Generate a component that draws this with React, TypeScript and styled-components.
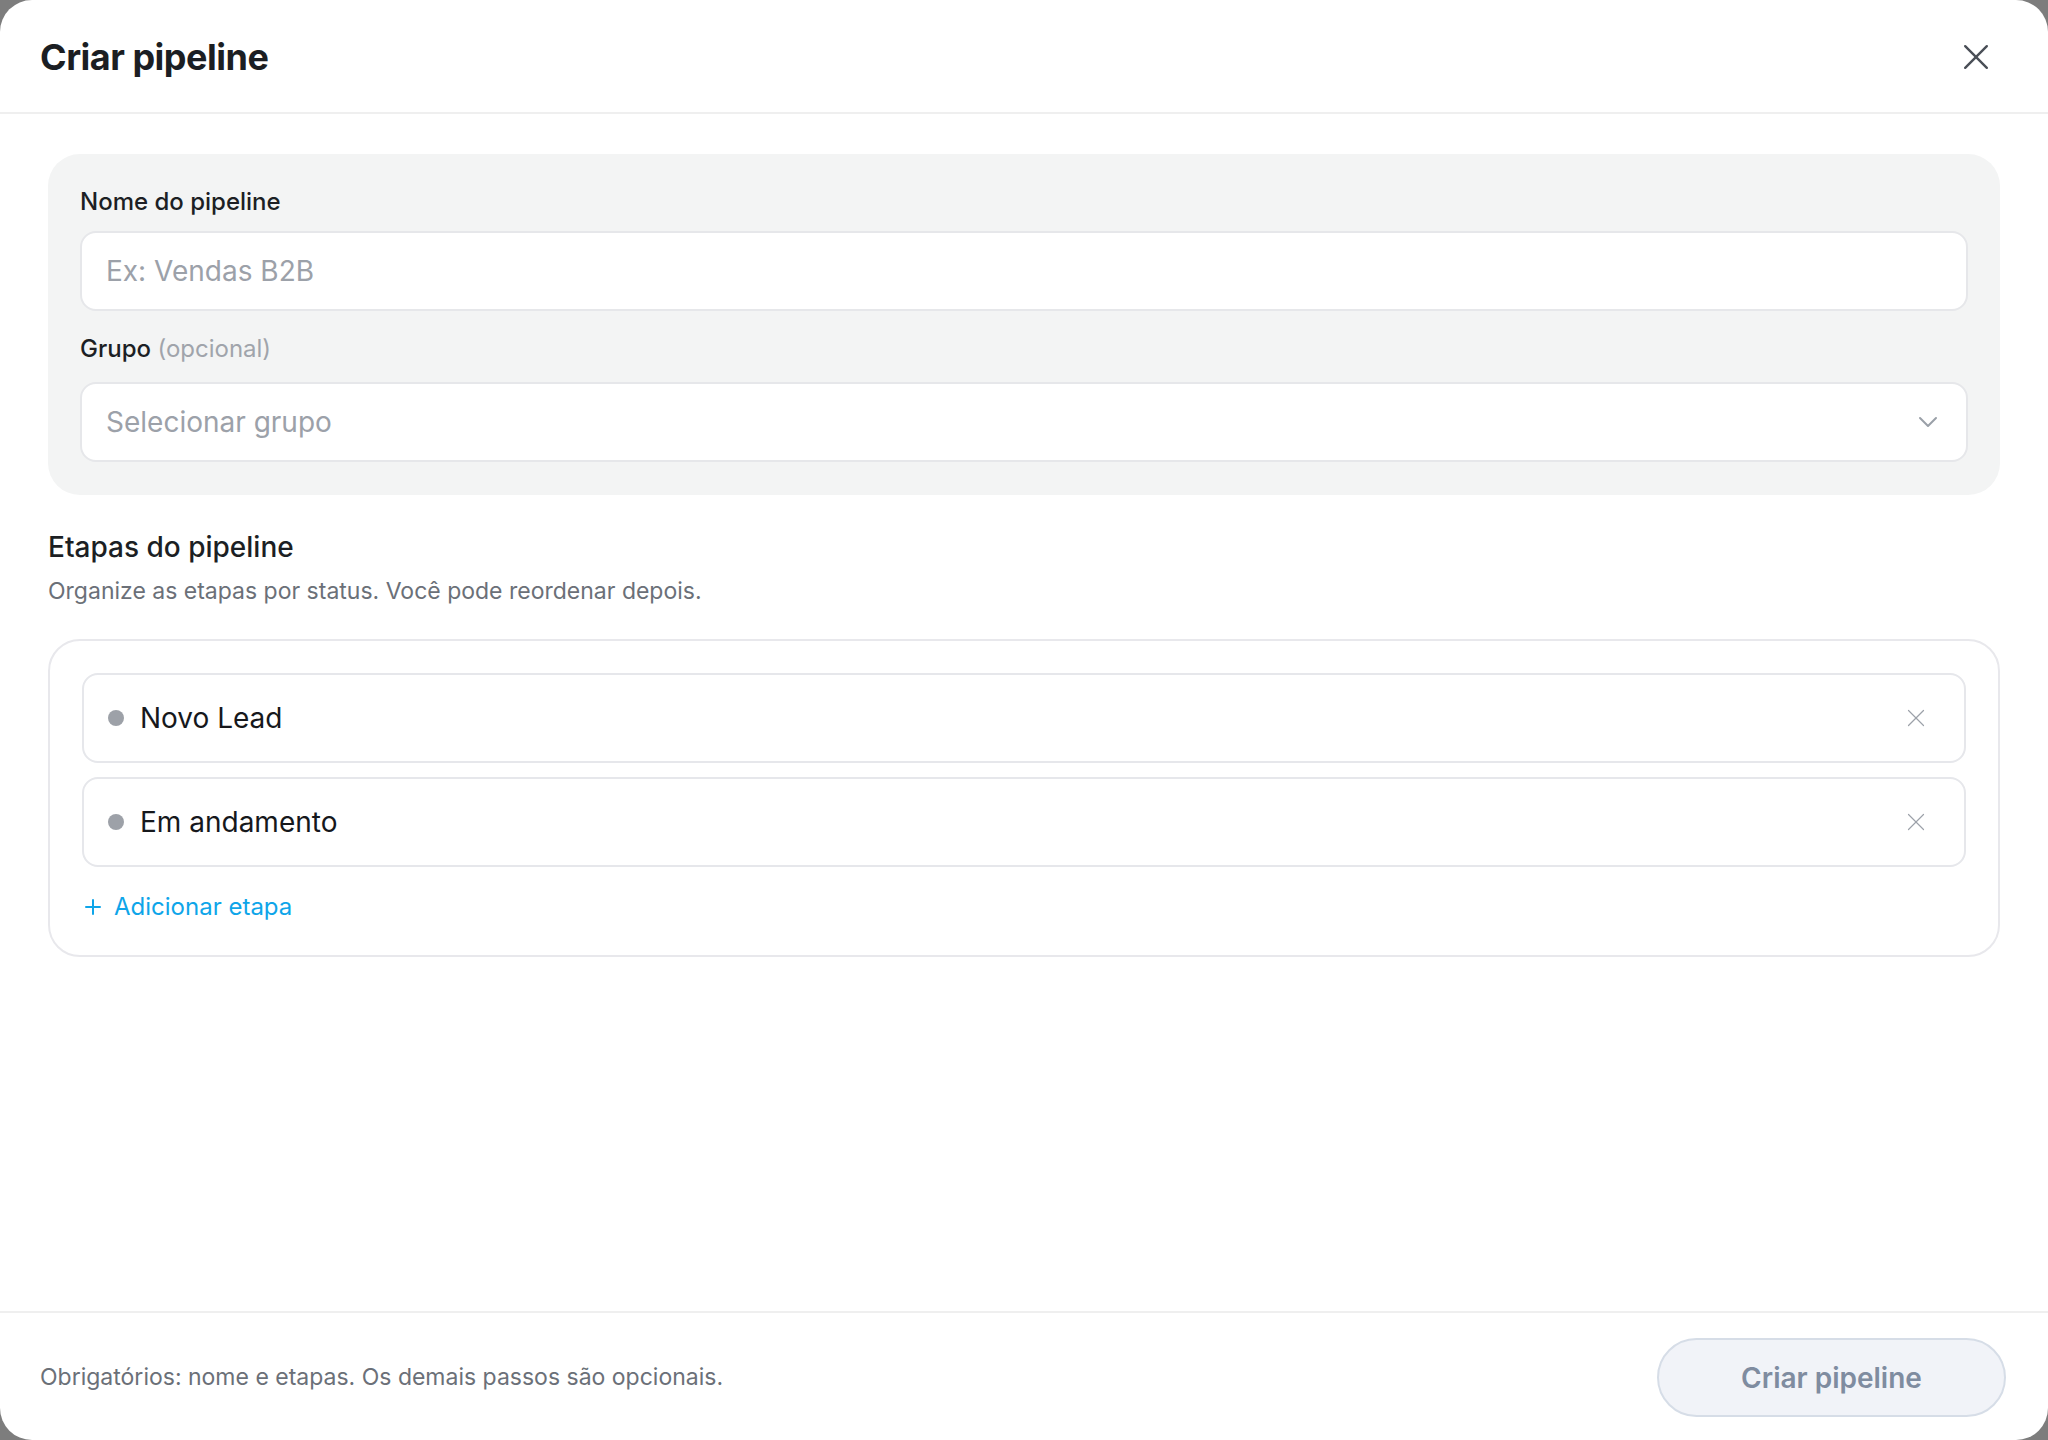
import React from 'react';
import styled, { createGlobalStyle } from 'styled-components';

const GlobalStyle = createGlobalStyle`
  html, body {
    margin: 0;
    padding: 0;
    background: #7d7d7d;
  }
  * { box-sizing: border-box; }
  body {
    font-family: Inter, "Noto Sans", "Liberation Sans", sans-serif;
    color: #1c1f24;
  }
`;

const Modal = styled.div`
  width: 100vw;
  height: 100vh;
  background: #ffffff;
  border-radius: 32px;
  display: flex;
  flex-direction: column;
  overflow: hidden;
`;

const Header = styled.header`
  height: 114px;
  flex-shrink: 0;
  display: flex;
  align-items: center;
  justify-content: space-between;
  padding: 2px 48px 0 40px;
  border-bottom: 2px solid #efefef;
`;

const Title = styled.h1`
  margin: 0;
  font-size: 36px;
  font-weight: 700;
  letter-spacing: -0.5px;
  color: #1b1e23;
`;

const IconButton = styled.button<{ $size: number; $color: string }>`
  width: ${(p) => p.$size}px;
  height: ${(p) => p.$size}px;
  display: flex;
  align-items: center;
  justify-content: center;
  border: none;
  background: transparent;
  padding: 0;
  cursor: pointer;
  color: ${(p) => p.$color};
`;

const Body = styled.main`
  flex: 1;
  padding: 40px 48px;
  display: flex;
  flex-direction: column;
`;

const FieldsPanel = styled.section`
  background: #f3f4f4;
  border-radius: 32px;
  padding: 32px 32px 33px;
  display: flex;
  flex-direction: column;
`;

const Label = styled.label<{ $spaced?: boolean }>`
  font-size: 24px;
  line-height: 32px;
  font-weight: 500;
  color: #1c1f24;
  margin: ${(p) => (p.$spaced ? '22px 0 17px' : '0 0 13px')};
`;

const Optional = styled.span`
  color: #a0a4ab;
  font-weight: 400;
`;

const InputBox = styled.div`
  height: 80px;
  background: #ffffff;
  border: 2px solid #e6e7ea;
  border-radius: 16px;
  padding: 0 28px 0 24px;
  display: flex;
  align-items: center;
  justify-content: space-between;
  font-size: 28px;
  color: #9ca1a9;
`;

const SectionTitle = styled.h2`
  margin: 34px 0 10px;
  font-size: 28px;
  line-height: 36px;
  font-weight: 500;
  color: #1c1f24;
`;

const SectionHint = styled.p`
  margin: 0;
  font-size: 23px;
  line-height: 32px;
  color: #6b7078;
`;

const StagesBox = styled.section`
  margin-top: 32px;
  border: 2px solid #e8e8ec;
  border-radius: 32px;
  padding: 32px;
  display: flex;
  flex-direction: column;
  gap: 14px;
`;

const StageRow = styled.div`
  height: 90px;
  border: 2px solid #e6e7eb;
  border-radius: 16px;
  padding: 0 24px;
  display: flex;
  align-items: center;
  gap: 16px;
`;

const Dot = styled.span`
  width: 16px;
  height: 16px;
  border-radius: 50%;
  background: #9da1a8;
  flex-shrink: 0;
`;

const StageName = styled.span`
  flex: 1;
  font-size: 28px;
  color: #16181c;
`;

const AddLink = styled.button`
  margin-top: 10px;
  align-self: flex-start;
  display: flex;
  align-items: center;
  gap: 12px;
  border: none;
  background: transparent;
  padding: 0 0 0 2px;
  font-family: inherit;
  font-size: 24px;
  line-height: 32px;
  color: #0ea5e9;
  cursor: pointer;
`;

const Footer = styled.footer`
  height: 129px;
  flex-shrink: 0;
  border-top: 2px solid #efefef;
  padding: 0 42px 0 40px;
  display: flex;
  align-items: center;
  justify-content: space-between;
`;

const FooterNote = styled.p`
  margin: 0;
  font-size: 23px;
  color: #6b7078;
`;

const PrimaryButton = styled.button`
  width: 349px;
  height: 79px;
  margin-top: 2px;
  border-radius: 999px;
  border: 2px solid #d6dde7;
  background: #f1f3f8;
  color: #7f8ca0;
  font-family: inherit;
  font-size: 28px;
  font-weight: 600;
  cursor: not-allowed;
`;

const CrossIcon = ({ size, stroke }: { size: number; stroke: number }) => (
  <svg width={size} height={size} viewBox="0 0 24 24" fill="none" stroke="currentColor" strokeWidth={stroke} strokeLinecap="round">
    <line x1="2" y1="2" x2="22" y2="22" />
    <line x1="22" y1="2" x2="2" y2="22" />
  </svg>
);

const ChevronDown = () => (
  <svg width="20" height="12" viewBox="0 0 20 12" fill="none" stroke="#9aa0a8" strokeWidth="2" strokeLinecap="round" strokeLinejoin="round">
    <polyline points="2,2 10,10 18,2" />
  </svg>
);

const PlusIcon = () => (
  <svg width="18" height="18" viewBox="0 0 18 18" fill="none" stroke="currentColor" strokeWidth="2" strokeLinecap="round">
    <line x1="9" y1="2" x2="9" y2="16" />
    <line x1="2" y1="9" x2="16" y2="9" />
  </svg>
);

const stages = ['Novo Lead', 'Em andamento'];

export default function App() {
  return (
    <>
      <GlobalStyle />
      <Modal>
        <Header>
          <Title>Criar pipeline</Title>
          <IconButton $size={48} $color="#4a4f57" aria-label="Fechar">
            <CrossIcon size={26} stroke={2.2} />
          </IconButton>
        </Header>

        <Body>
          <FieldsPanel>
            <Label>Nome do pipeline</Label>
            <InputBox>Ex: Vendas B2B</InputBox>
            <Label $spaced>
              Grupo <Optional>(opcional)</Optional>
            </Label>
            <InputBox>
              Selecionar grupo
              <ChevronDown />
            </InputBox>
          </FieldsPanel>

          <SectionTitle>Etapas do pipeline</SectionTitle>
          <SectionHint>Organize as etapas por status. Você pode reordenar depois.</SectionHint>

          <StagesBox>
            {stages.map((s) => (
              <StageRow key={s}>
                <Dot />
                <StageName>{s}</StageName>
                <IconButton $size={48} $color="#9ca1a9" aria-label="Remover">
                  <CrossIcon size={18} stroke={1.6} />
                </IconButton>
              </StageRow>
            ))}
            <AddLink>
              <PlusIcon />
              Adicionar etapa
            </AddLink>
          </StagesBox>
        </Body>

        <Footer>
          <FooterNote>Obrigatórios: nome e etapas. Os demais passos são opcionais.</FooterNote>
          <PrimaryButton disabled>Criar pipeline</PrimaryButton>
        </Footer>
      </Modal>
    </>
  );
}
